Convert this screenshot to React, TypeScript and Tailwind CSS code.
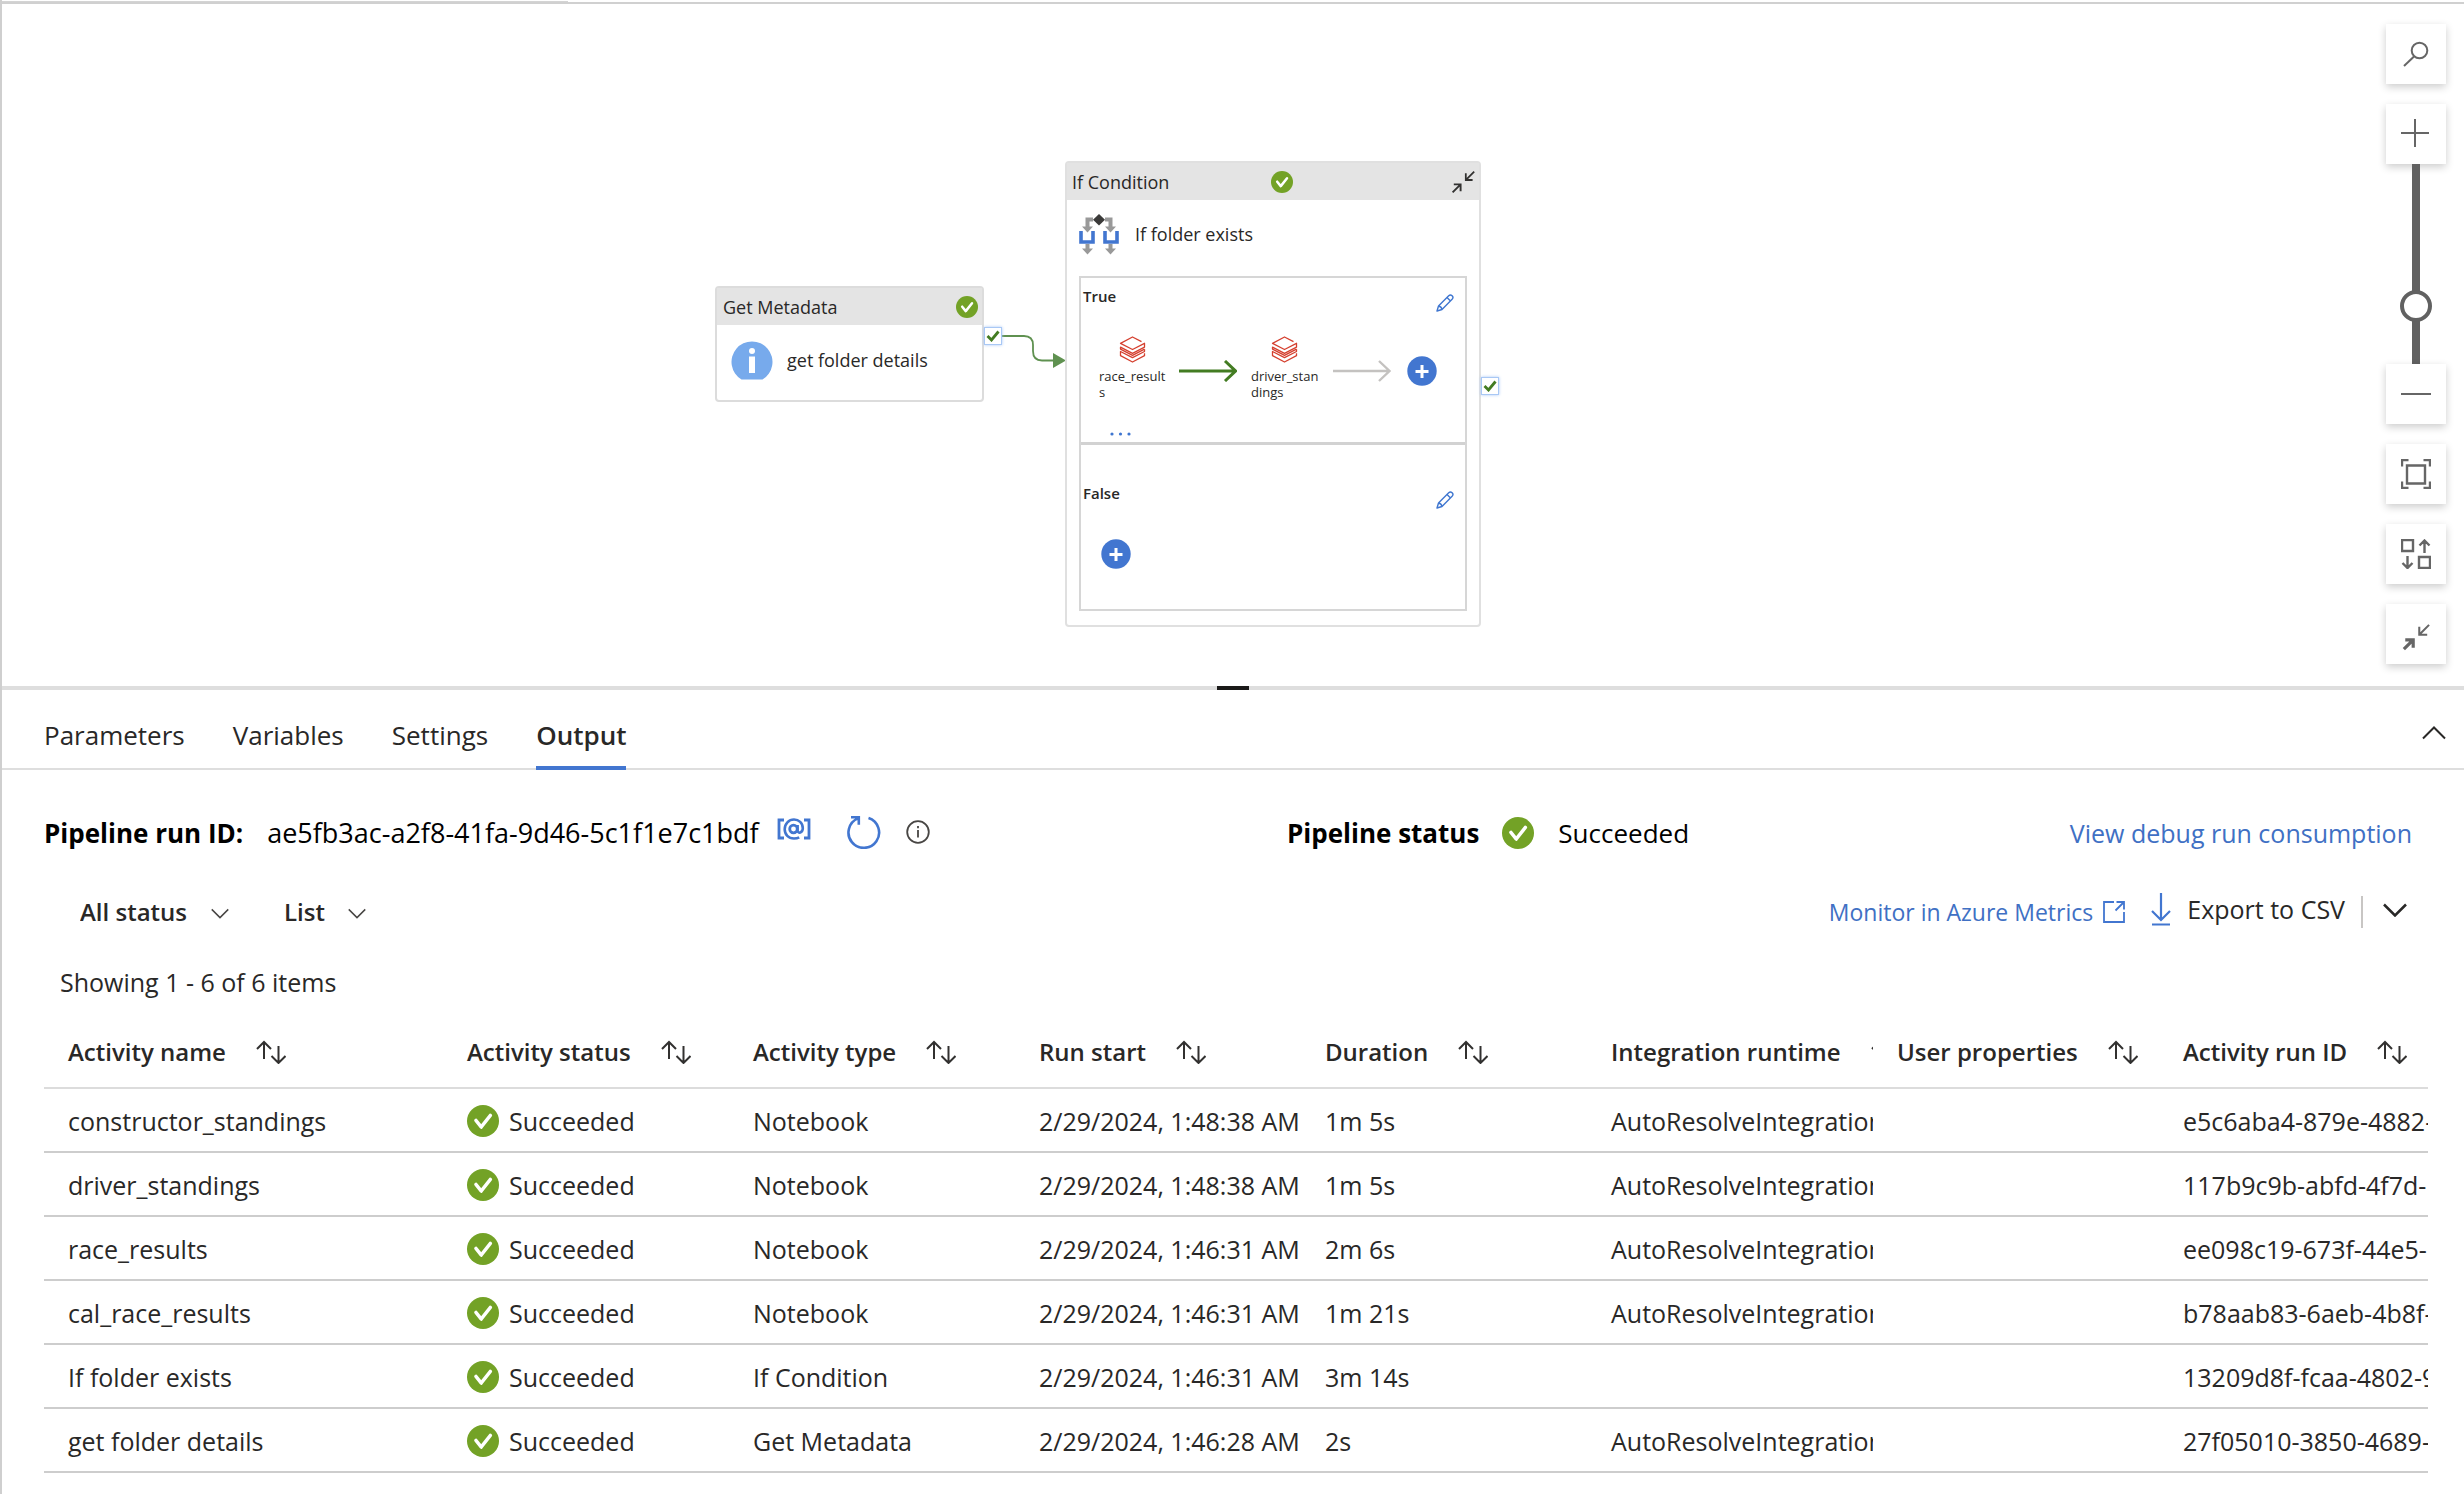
import React from "react";

type IconProps = { className?: string };

function SuccessIcon({ className = "" }: IconProps) {
  return (
    <svg viewBox="0 0 32 32" className={`shrink-0 ${className}`} aria-hidden="true">
      <circle cx="16" cy="16" r="16" fill="#73a226" />
      <path d="M9 15.5 14.2 22 23.3 10.5" fill="none" stroke="#fff" strokeWidth="3.6" strokeLinejoin="round" strokeLinecap="round" />
    </svg>
  );
}

function SortIcon() {
  return (
    <svg width="30" height="24" viewBox="0 0 30 24" fill="none" stroke="#323130" strokeWidth="2" className="shrink-0" aria-hidden="true">
      <path d="M8 19V2M1 9l7-7 7 7M22.500 6v17M15.500 16l7 7 7-7" />
    </svg>
  );
}

function ChevronDown({ className = "" }: IconProps) {
  return (
    <svg viewBox="0 0 24 14" fill="none" stroke="currentColor" className={`shrink-0 ${className}`} aria-hidden="true">
      <path d="M1 1.500 12 12.500 23 1.500" />
    </svg>
  );
}

function PencilIcon() {
  return (
    <svg width="18" height="18" viewBox="0 0 18 18" fill="none" stroke="#3f76d0" strokeWidth="1.400" strokeLinejoin="round" aria-hidden="true">
      <path d="M1 17l1.500-5L12.700 1.800c1-1 2.400-1 3.400 0s1 2.500 0 3.500L6 15.500zM11 3.500l3.500 3.500M2.500 12c1.600.2 3.200 1.800 3.500 3.500" />
    </svg>
  );
}

function AddIcon() {
  return (
    <svg width="30" height="30" viewBox="0 0 30 30" aria-hidden="true">
      <circle cx="15" cy="15" r="14.700" fill="#4276d0" />
      <path d="M15 9v13M8.500 15.500h13" stroke="#fff" strokeWidth="3" />
    </svg>
  );
}

function CollapseIcon({ className = "", stroke, bold }: IconProps & { stroke: string; bold?: boolean }) {
  return (
    <svg viewBox="0 0 30 30" fill="none" stroke={stroke} className={className} aria-hidden="true">
      <path d="M29 2 19 12M18.500 4v8.500H27" strokeWidth="2.200" />
      <path d="M2 28 12 18M3.500 18H12v8.500" strokeWidth={bold ? 3.4 : 2.4} />
    </svg>
  );
}

function NotebookIcon() {
  return (
    <svg width="27" height="28" viewBox="0 0 27 28" fill="none" stroke="#d5402f" strokeWidth="1.300" strokeLinejoin="round" aria-hidden="true">
      <path d="M22.500 5.700 13.500 1 1.500 7.300l12 6.200 12-6.200v3.900l-12 6.200-12-6.200v1.900l12 6.200 12-6.200" />
      <path d="M25.500 13.200v2.300l-12 6.200-12-6.200v4.200l12 6.300 12-6.300v-2.400" />
    </svg>
  );
}

function IfConditionIcon() {
  return (
    <svg width="40" height="42" viewBox="0 0 40 42" aria-hidden="true">
      <path d="M14 5.500H8.500V13M26 5.500h5.500V13M8.500 30v6M31.500 30v6" fill="none" stroke="#999" strokeWidth="4" />
      <path d="M3 12.500h11l-5.500 6zM26 12.500h11l-5.500 6zM3 34.500h11l-5.500 6zM26 34.500h11l-5.500 6z" fill="#999" />
      <path d="M2 17v11h12V17M26 17v11h12V17" fill="none" stroke="#4276d0" strokeWidth="3.600" />
      <path d="m20 0 6 5.800-6 5.800-6-5.800z" fill="#3b3a39" />
    </svg>
  );
}

function StepArrow({ color, width }: { color: string; width: number }) {
  return (
    <svg width="58" height="22" viewBox="0 0 58 22" fill="none" stroke={color} strokeWidth={width} aria-hidden="true">
      <path d="M0 11h56M46 1l10.500 10L46 21" />
    </svg>
  );
}

function SuccessPort({ className = "" }: IconProps) {
  return (
    <span className={`absolute flex size-[18px] items-center justify-center border border-[#a9c8f5] bg-white shadow-[0_0_3px_#a9c8f5] ${className}`}>
      <svg width="14" height="12" viewBox="0 0 14 12" fill="none" stroke="#437c22" strokeWidth="2.800" aria-hidden="true">
        <path d="M1.500 6 5.500 10 12.500 1.500" />
      </svg>
    </span>
  );
}

function CanvasButton({ label, children }: { label: string; children: React.ReactNode }) {
  return (
    <button type="button" aria-label={label} className="flex size-[60px] items-center justify-center bg-white shadow-[0_3px_8px_rgba(0,0,0,0.2)]">
      {children}
    </button>
  );
}

function CanvasToolbar() {
  return (
    <div className="absolute top-5 right-[18px] flex flex-col items-center gap-5">
      <CanvasButton label="Search">
        <svg width="26" height="26" viewBox="0 0 26 26" fill="none" stroke="#666" strokeWidth="2" aria-hidden="true">
          <circle cx="16.500" cy="9.500" r="7.800" />
          <path d="M11 15.500 1 25" />
        </svg>
      </CanvasButton>
      <div className="flex flex-col items-center">
        <CanvasButton label="Zoom in">
          <svg width="30" height="30" viewBox="0 0 30 30" stroke="#666" strokeWidth="2" aria-hidden="true">
            <path d="M0 14h28M14 0v28" />
          </svg>
        </CanvasButton>
        <input
          type="range"
          aria-label="Zoom level"
          min={0}
          max={100}
          defaultValue={25}
          className="h-[200px] w-8 appearance-none bg-transparent [direction:rtl] [writing-mode:vertical-lr] [&::-webkit-slider-runnable-track]:mx-auto [&::-webkit-slider-runnable-track]:w-2 [&::-webkit-slider-runnable-track]:bg-[#616161] [&::-webkit-slider-thumb]:-ml-3 [&::-webkit-slider-thumb]:size-8 [&::-webkit-slider-thumb]:appearance-none [&::-webkit-slider-thumb]:rounded-full [&::-webkit-slider-thumb]:border-4 [&::-webkit-slider-thumb]:border-[#616161] [&::-webkit-slider-thumb]:bg-white"
        />
        <CanvasButton label="Zoom out">
          <svg width="30" height="30" viewBox="0 0 30 30" stroke="#666" strokeWidth="2" aria-hidden="true">
            <path d="M0 15h30" />
          </svg>
        </CanvasButton>
      </div>
      <CanvasButton label="Zoom to fit">
        <svg width="30" height="30" viewBox="0 0 30 30" fill="none" stroke="#666" strokeWidth="2.400" aria-hidden="true">
          <path d="M1 7.500V1h6.500M22.500 1H29v6.500M29 22.500V29h-6.500M7.500 29H1v-6.500M6 6.500h18v18H6z" />
        </svg>
      </CanvasButton>
      <CanvasButton label="Auto align">
        <svg width="30" height="30" viewBox="0 0 30 30" fill="none" stroke="#666" strokeWidth="2.400" aria-hidden="true">
          <path d="M1 1h11v11H1zM18 18h11v11H18zM23.500 14V1.500M18.500 6.500l5-5 5 5M6.500 17v12M1.500 24l5 5 5-5" />
        </svg>
      </CanvasButton>
      <CanvasButton label="Collapse all">
        <CollapseIcon stroke="#666" bold className="mt-1.5 size-[28px]" />
      </CanvasButton>
    </div>
  );
}

function MetadataNode() {
  return (
    <article className="absolute top-[282px] left-[713px] h-[116px] w-[269px] rounded border-2 border-[#dcdcdc] bg-white">
      <header className="flex h-[37px] items-center justify-between bg-[#e4e4e4] pr-1 pl-1.5">
        <h2>Get Metadata</h2>
        <SuccessIcon className="size-[22px]" />
      </header>
      <div className="flex items-start gap-3.5 pt-[15px] pl-3.5">
        <svg width="42" height="40" viewBox="0 0 42 40" aria-hidden="true">
          <path d="M10.500 39.500A20.500 20.500 0 1 1 31.500 39.500z" fill="#77aaec" />
          <circle cx="21" cy="11" r="3" fill="#fff" />
          <path d="M18 16.500h6V33h-6z" fill="#fff" />
        </svg>
        <p className="pt-2">get folder details</p>
      </div>
    </article>
  );
}

function Step({ name }: { name: string }) {
  return (
    <div className="w-[70px]">
      <div className="pl-5">
        <NotebookIcon />
      </div>
      <p className="pt-1 text-[13px] leading-4 break-all">{name}</p>
    </div>
  );
}

function IfConditionNode() {
  return (
    <article className="absolute top-[157px] left-[1063px] h-[466px] w-[416px] rounded border-2 border-[#e0e0e0] bg-white">
      <header className="grid h-[37px] grid-cols-[1fr_auto_1fr] items-center bg-[#e4e4e4] pr-1 pl-[5px]">
        <h2>If Condition</h2>
        <SuccessIcon className="ml-4 size-[22px]" />
        <button type="button" aria-label="Collapse If Condition" className="justify-self-end">
          <CollapseIcon stroke="#323130" className="size-6" />
        </button>
      </header>
      <div className="flex gap-4 pt-[14px] pl-3">
        <IfConditionIcon />
        <p className="pt-2">If folder exists</p>
      </div>
      <div className="mx-3 mt-5 h-[335px] border-2 border-[#d6d6d6] text-[15px] font-semibold">
        <section className="relative h-[167px] border-b-[3px] border-[#d2d2d2]">
          <h3 className="pt-1.5 pl-0.5">True</h3>
          <button type="button" aria-label="Edit true activities" className="absolute top-4 right-[11px]">
            <PencilIcon />
          </button>
          <div className="flex pt-7 pl-[18px] font-normal">
            <Step name="race_results" />
            <div className="pt-6 pl-2.5"><StepArrow color="#437c22" width={3} /></div>
            <div className="pl-[14px]"><Step name="driver_standings" /></div>
            <div className="pt-6 pl-3"><StepArrow color="#c4c2c0" width={2.4} /></div>
            <button type="button" aria-label="Add true activity" className="self-start pt-5 pl-4">
              <AddIcon />
            </button>
          </div>
          <button type="button" aria-label="More activities" className="absolute bottom-1.5 left-7">
            <svg width="24" height="4" viewBox="0 0 24 4" fill="#3f76d0" aria-hidden="true">
              <circle cx="3" cy="2" r="1.600" />
              <circle cx="11.500" cy="2" r="1.600" />
              <circle cx="20" cy="2" r="1.600" />
            </svg>
          </button>
        </section>
        <section className="relative h-[164px]">
          <h3 className="pt-9 pl-0.5">False</h3>
          <button type="button" aria-label="Edit false activities" className="absolute top-[46px] right-[11px]">
            <PencilIcon />
          </button>
          <button type="button" aria-label="Add false activity" className="block pt-[34px] pl-5">
            <AddIcon />
          </button>
        </section>
      </div>
    </article>
  );
}

const columns = [
  { name: "Activity name", width: "w-[399px]" },
  { name: "Activity status", width: "w-[286px]" },
  { name: "Activity type", width: "w-[286px]" },
  { name: "Run start", width: "w-[286px]" },
  { name: "Duration", width: "w-[286px]" },
  { name: "Integration runtime", width: "w-[286px]" },
  { name: "User properties", width: "w-[286px]" },
  { name: "Activity run ID", width: "w-auto" },
];

const runtime = "AutoResolveIntegrationRuntime";

const rows = [
  ["constructor_standings", "Notebook", "2/29/2024, 1:48:38 AM", "1m 5s", runtime, "e5c6aba4-879e-4882-"],
  ["driver_standings", "Notebook", "2/29/2024, 1:48:38 AM", "1m 5s", runtime, "117b9c9b-abfd-4f7d-"],
  ["race_results", "Notebook", "2/29/2024, 1:46:31 AM", "2m 6s", runtime, "ee098c19-673f-44e5-"],
  ["cal_race_results", "Notebook", "2/29/2024, 1:46:31 AM", "1m 21s", runtime, "b78aab83-6aeb-4b8f-"],
  ["If folder exists", "If Condition", "2/29/2024, 1:46:31 AM", "3m 14s", "", "13209d8f-fcaa-4802-9"],
  ["get folder details", "Get Metadata", "2/29/2024, 1:46:28 AM", "2s", runtime, "27f05010-3850-4689-"],
];

const cell = "overflow-hidden pt-0.5 pl-6 whitespace-nowrap";

function ActivityTable() {
  return (
    <table className="w-full table-fixed border-separate border-spacing-0 text-left">
      <thead>
        <tr>
          {columns.map((c) => (
            <th key={c.name} scope="col" className={`h-[72px] overflow-hidden border-b-2 border-[#dcdcdc] pl-6 text-2xl font-semibold ${c.width}`}>
              <button type="button" className="flex w-max items-center gap-[30px]">
                {c.name}
                <SortIcon />
              </button>
            </th>
          ))}
        </tr>
      </thead>
      <tbody className="[&_td]:h-16 [&_td]:border-b-2 [&_td]:border-[#cdcdcd]">
        {rows.map(([name, type, start, duration, ir, id]) => (
          <tr key={name}>
            <td className={cell}>{name}</td>
            <td className={cell}>
              <span className="flex items-center gap-2.5">
                <SuccessIcon className="size-8" />
                Succeeded
              </span>
            </td>
            <td className={cell}>{type}</td>
            <td className={cell}>{start}</td>
            <td className={cell}>{duration}</td>
            <td className={cell}>{ir}</td>
            <td className={cell}></td>
            <td className={cell}>{id}</td>
          </tr>
        ))}
      </tbody>
    </table>
  );
}

function FilterSelect({ label, value }: { label: string; value: string }) {
  return (
    <label className="flex items-center gap-[23px] text-[#484644]">
      <select aria-label={label} defaultValue={value} className="appearance-none bg-transparent text-2xl font-semibold text-[#292827]">
        <option>{value}</option>
      </select>
      <ChevronDown className="mt-0.5 h-[11px] w-[18px] stroke-2" />
    </label>
  );
}

export default function App() {
  return (
    <div className="min-h-screen overflow-hidden border-l-2 border-[#cfcfcf] bg-white font-['Open_Sans',sans-serif] text-[25px] leading-8 text-[#292827]">
      <div className="h-0.5 w-[23%] border-b border-[#d4d4d4]" />
      <main className="relative h-[684px] border-t-2 border-[#d0d0d0] text-[18px] leading-6">
        <svg className="absolute top-[320px] left-[1000px]" width="64" height="48" viewBox="0 0 64 48" fill="none" aria-hidden="true">
          <path d="M0 12h22c6 0 9 3 9 9v6c0 6 3 9.500 9 9.500h12" stroke="#5f9150" strokeWidth="1.800" />
          <path d="M51 29v15l13-7.500z" fill="#5f9150" />
        </svg>
        <MetadataNode />
        <SuccessPort className="top-[323px] left-[982px]" />
        <IfConditionNode />
        <SuccessPort className="top-[373px] left-[1479px]" />
        <CanvasToolbar />
      </main>

      <div className="flex h-1 justify-center bg-[#dedede]">
        <div className="h-1 w-8 bg-[#1b1a19]" />
      </div>

      <nav className="flex h-20 items-stretch justify-between border-b-2 border-[#dedede] pr-[18px] pl-[42px] text-[26px]">
        <div className="flex gap-12">
          <button type="button" className="pt-3">Parameters</button>
          <button type="button" className="pt-3">Variables</button>
          <button type="button" className="pt-3">Settings</button>
          <button type="button" className="-mb-0.5 border-b-4 border-[#4276d0] pt-3.5 font-semibold">Output</button>
        </div>
        <button type="button" aria-label="Collapse panel" className="pt-2">
          <ChevronDown className="h-[14px] w-6 rotate-180 stroke-2" />
        </button>
      </nav>

      <section className="pr-9 pl-[42px]">
        <div className="mt-[43px] grid h-10 grid-cols-[1243px_1fr_auto] items-center pr-4">
          <div className="flex items-center text-[27px] text-black">
            <span className="mr-6 text-[26px] font-bold">Pipeline run ID:</span>
            <span>ae5fb3ac-a2f8-41fa-9d46-5c1f1e7c1bdf</span>
            <button type="button" aria-label="Copy as parameter" className="mb-2 ml-[18px]">
              <svg width="34" height="22" viewBox="0 0 34 22" fill="none" stroke="#4276d0" aria-hidden="true">
                <path d="M7 2H2v18h5M27 2h5v18h-5" strokeWidth="2.800" />
                <circle cx="16.500" cy="11" r="3.800" strokeWidth="2.800" />
                <path d="M20.600 7v5.500c0 3.400 5.200 2.600 5.200-2.300 0-5.200-4-8.700-8.800-8.700-5.200 0-9.300 4.200-9.300 9.700s3.800 9.300 9.300 9.300c2 0 3.800-.4 5.200-1.200" strokeWidth="2.600" />
              </svg>
            </button>
            <button type="button" aria-label="Refresh" className="mb-0.5 ml-9">
              <svg width="34" height="34" viewBox="0 0 34 34" fill="none" stroke="#4276d0" strokeWidth="2.600" aria-hidden="true">
                <path d="M21.500 3A15.300 15.300 0 1 1 11 3.400M4 2.200h7.800v7.600" />
              </svg>
            </button>
            <button type="button" aria-label="Run details" className="mb-0.5 ml-[25px]">
              <svg width="24" height="24" viewBox="0 0 24 24" fill="none" stroke="#484644" strokeWidth="1.800" aria-hidden="true">
                <circle cx="12" cy="12" r="10.800" />
                <path d="M12 10v7.500M12 6v2.200" />
              </svg>
            </button>
          </div>
          <div className="flex items-center text-[26px] text-black">
            <strong className="font-bold">Pipeline status</strong>
            <SuccessIcon className="mr-6 ml-[23px] size-8" />
            Succeeded
          </div>
          <a href="#consumption" className="text-[#4070c4]">View debug run consumption</a>
        </div>

        <div className="mt-[39px] flex h-10 items-center justify-between pr-[21px] pl-9">
          <div className="flex gap-[55px]">
            <FilterSelect label="Status filter" value="All status" />
            <FilterSelect label="View mode" value="List" />
          </div>
          <div className="flex items-center">
            <a href="#metrics" className="flex items-center gap-2.5 text-[23px] text-[#4070c4]">
              Monitor in Azure Metrics
              <svg width="22" height="22" viewBox="0 0 22 22" fill="none" stroke="#4276d0" strokeWidth="1.800" aria-hidden="true">
                <path d="M11 1H1v20h20V11M13.500 1H21v7.500M21 1l-8.500 8.500" />
              </svg>
            </a>
            <button type="button" className="mb-1.5 ml-[26px] flex items-center gap-4 text-[25px]">
              <svg width="20" height="33" viewBox="0 0 20 33" fill="none" stroke="#4276d0" strokeWidth="2.200" aria-hidden="true">
                <path d="M10 0v27M1 18l9 9 9-9M1 31.500h18" />
              </svg>
              Export to CSV
            </button>
            <span className="ml-4 h-8 w-0.5 bg-[#c8c6c4]" />
            <button type="button" aria-label="More export options" className="mb-1 ml-5">
              <ChevronDown className="h-[14px] w-6 stroke-[2.5]" />
            </button>
          </div>
        </div>

        <p className="mt-[34px] pl-4">Showing 1 - 6 of 6 items</p>
        <div className="mt-[19px]">
          <ActivityTable />
        </div>
      </section>
    </div>
  );
}
